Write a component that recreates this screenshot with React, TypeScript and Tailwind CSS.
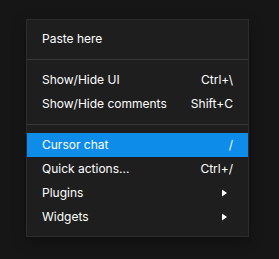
import React from "react";

type Item = { label: string; shortcut?: string; arrow?: boolean; active?: boolean };

const Arrow = () => (
  <svg width="5" height="8" viewBox="0 0 5 8" className="block">
    <path d="M0 0.5 L5 4 L0 7.5 Z" fill="#ffffff" />
  </svg>
);

const Row = ({ item }: { item: Item }) => (
  <div
    className={`flex h-6 items-center justify-between pl-[15px] pr-[15px] text-[12px] text-white ${
      item.active ? "bg-[#0d8ce9]" : ""
    }`}
  >
    <span>{item.label}</span>
    {item.shortcut && <span>{item.shortcut}</span>}
    {item.arrow && (
      <span className="pr-[6px]">
        <Arrow />
      </span>
    )}
  </div>
);

const Sep = () => <div className="my-2 h-px bg-[#383838]" />;

export default function App() {
  return (
    <div
      className="h-[259px] w-[279px] bg-[#161616] pl-[26px] pt-[19px]"
      style={{ fontFamily: "Inter, 'Noto Sans', sans-serif" }}
    >
      <div className="w-[223px] border border-[#2c2c2c] bg-[#1e1e1e] py-[7px] shadow-[0_4px_12px_rgba(0,0,0,0.35)]">
        <Row item={{ label: "Paste here" }} />
        <Sep />
        <Row item={{ label: "Show/Hide UI", shortcut: "Ctrl+\\" }} />
        <Row item={{ label: "Show/Hide comments", shortcut: "Shift+C" }} />
        <Sep />
        <Row item={{ label: "Cursor chat", shortcut: "/", active: true }} />
        <Row item={{ label: "Quick actions...", shortcut: "Ctrl+/" }} />
        <Row item={{ label: "Plugins", arrow: true }} />
        <Row item={{ label: "Widgets", arrow: true }} />
      </div>
    </div>
  );
}
